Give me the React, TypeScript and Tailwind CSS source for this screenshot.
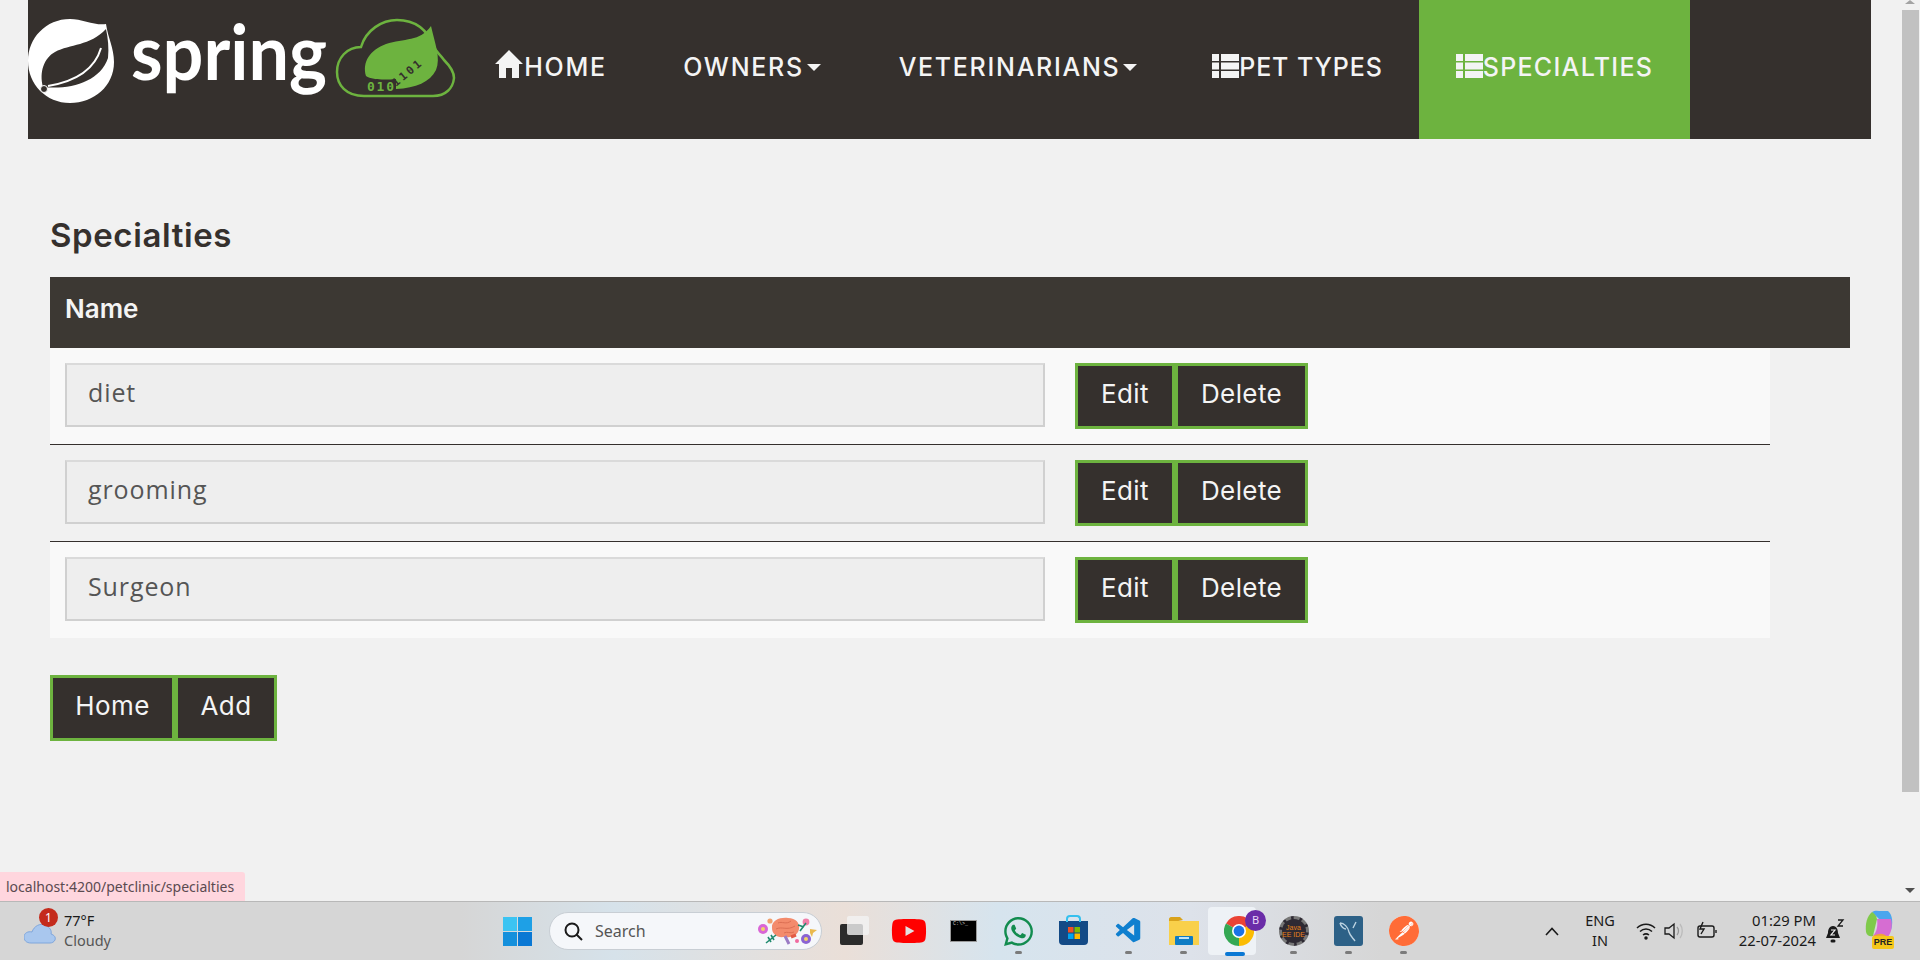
import React from "react";
import { FaWhatsapp, FaYoutube } from "react-icons/fa";
import { VscVscode } from "react-icons/vsc";
import { SiPostman } from "react-icons/si";

const Home = () => (
  <svg width="30" height="30" viewBox="0 0 30 30" className="mb-[6px] shrink-0">
    <path d="M15 1 L29 15 L25 15 L25 29 L18 29 L18 19 L12 19 L12 29 L5 29 L5 15 L1 15 Z" fill="#f4f4f4" />
  </svg>
);

const ThList = () => (
  <svg width="27" height="24" viewBox="0 0 27 24" className="mb-[3px] shrink-0">
    <g fill="#f4f4f4">
      <rect x="0" y="0" width="7" height="7" />
      <rect x="0" y="8.5" width="7" height="7" />
      <rect x="0" y="17" width="7" height="7" />
      <rect x="9" y="0" width="18" height="7" />
      <rect x="9" y="8.5" width="18" height="7" />
      <rect x="9" y="17" width="18" height="7" />
    </g>
  </svg>
);

const Caret = () => (
  <span className="ml-[3px] inline-block h-0 w-0 border-x-[7px] border-t-[7px] border-x-transparent border-t-[#f4f4f4]" />
);

const Logo = () => (
  <svg width="429" height="139" viewBox="28 0 429 139" className="shrink-0">
    <path d="M106 24 C108 38 114 48 114 62 C114 86 94 103 70 103 C46 103 28 84 28 61 C28 38 46 19 70 19 C82 19 96 26 106 24 Z" fill="#fff" />
    <path d="M106 29 C90 46 70 44 55 52 C44 58 39 72 43 87 C70 90 100 82 108 58 C109 48 108 38 106 29 Z" fill="#35302d" />
    <path d="M48 86 C72 82 94 72 101 48" fill="none" stroke="#fff" strokeWidth="2" />
    <circle cx="44" cy="89" r="3.5" fill="#35302d" stroke="#fff" strokeWidth="1" />
    <text x="131" y="80" fontFamily="Lato, sans-serif" fontSize="76" fontWeight="700" fill="#fff" textLength="196" lengthAdjust="spacingAndGlyphs">spring</text>
    <path d="M364 96 C346 96 337 85 337 72 C337 58 347 47 361 47 C366 30 382 20 397 20 C416 20 428 31 434 47 C436 52 440 54 444 60 C450 66 454 72 454 78 C453 88 446 96 433 96 Z" fill="none" stroke="#6db33f" strokeWidth="2.5" />
    <path d="M431 26 C435 44 441 58 436 70 C430 82 416 88 396 89 L396 79 C385 80 372 80 366 76 C362 62 370 50 386 44 C404 38 420 42 431 26 Z" fill="#6db33f" />
    <text x="367" y="91" fontFamily="'DejaVu Sans Mono', monospace" fontSize="13" fontWeight="700" fill="#6db33f" textLength="27">010</text>
    <text x="396" y="87" fontFamily="'DejaVu Sans Mono', monospace" fontSize="11" fontWeight="700" fill="#35302d" transform="rotate(-40 396 87)" textLength="34">1101</text>
  </svg>
);

const NavItem = ({ w, icon, label, caret, active, track }: { w: string; icon?: React.ReactNode; label: string; caret?: boolean; active?: boolean; track: string }) => (
  <div className={`flex h-full items-center justify-center pb-[5px] ${w} ${active ? "bg-[#6db33f]" : ""}`}>
    {icon}
    <span className={`font-['Inter',sans-serif] text-[25px] font-medium leading-none text-[#f4f4f4] ${track}`}>{label}</span>
    {caret && <Caret />}
  </div>
);

const Btn = ({ label, w }: { label: string; w: string }) => (
  <button className={`flex h-[66px] items-center justify-center border-[3px] border-[#6db33f] bg-[#35302d] pb-[5px] font-['Inter',sans-serif] text-[26px] font-normal tracking-[0.4px] text-[#f4f4f4] ${w}`}>
    {label}
  </button>
);

const Row = ({ name, bg, h, line }: { name: string; bg: string; h: string; line?: boolean }) => (
  <div className={`flex w-[1720px] items-start pl-[15px] pt-[15px] ${h} ${bg} ${line ? "border-b border-[#35302d]" : ""}`}>
    <div className="flex h-[64px] w-[980px] items-center border-2 border-[#d0d0d0] border-t-[#dadada] bg-[#eeeeee] pb-[5px] pl-[21px] font-['Open_Sans',sans-serif] text-[25px] tracking-[0.9px] text-[#555555]">
      {name}
    </div>
    <div className="ml-[30px] flex">
      <Btn label="Edit" w="w-[100px]" />
      <Btn label="Delete" w="w-[133px]" />
    </div>
  </div>
);

const Slot = ({ children, dot }: { children: React.ReactNode; dot?: boolean }) => (
  <div className="relative flex h-[59px] w-[55px] items-center justify-center">
    {children}
    {dot && <span className="absolute bottom-[7px] h-[3px] w-[7px] rounded-full bg-[#7b7b7b]" />}
  </div>
);

const Brain = () => (
  <svg width="66" height="36" viewBox="0 0 66 36">
    <path d="M18 15 C17 7 27 4 34 5 C42 5 46 10 45 16 C44 23 36 25 30 24 C23 25 18 21 18 15 Z" fill="#f38b6c" />
    <path d="M24 10 C28 8 32 12 37 8 M22 16 C28 13 33 18 41 13 M30 20 C33 18 36 21 40 19" fill="none" stroke="#dc6f53" strokeWidth="1" />
    <path d="M31 23 L35 31" stroke="#9b7bc4" strokeWidth="3" />
    <path d="M37 24 L42 22" stroke="#e25b45" strokeWidth="3" />
    <circle cx="9" cy="16" r="5" fill="#d966d6" /><circle cx="9" cy="16" r="2" fill="#f1d36a" />
    <circle cx="52" cy="26" r="5" fill="#8a63d2" /><circle cx="52" cy="26" r="2" fill="#f1d36a" />
    <circle cx="16" cy="8" r="2.6" fill="#f0a06e" />
    <circle cx="52" cy="9" r="3.4" fill="#f07ea8" />
    <circle cx="43" cy="28" r="2" fill="#f06aa0" />
    <path d="M46 18 L52 10 M44 12 L50 14 M12 30 L22 22 M14 24 L17 29 M17 22 L20 27" stroke="#1f8a6e" strokeWidth="1.6" />
    <path d="M56 16 L63 17 L59 20 L58 24 L56 20 Z" fill="#eab94e" />
  </svg>
);

const Chrome = () => (
  <svg width="30" height="30" viewBox="0 0 30 30">
    <path d="M15 15 L2 7.5 A15 15 0 0 1 28 7.5 Z" fill="#ea4335" />
    <path d="M15 15 L2 7.5 A15 15 0 0 0 15 30 Z" fill="#34a853" />
    <path d="M15 15 L28 7.5 A15 15 0 0 1 15 30 Z" fill="#fbbc04" />
    <circle cx="15" cy="15" r="7" fill="#fff" /><circle cx="15" cy="15" r="5.4" fill="#1a73e8" />
  </svg>
);

export default function App() {
  return (
    <div className="relative flex h-[960px] w-[1920px] flex-col overflow-hidden bg-[#f1f1f1]">
      <div className="flex h-[901px] w-full">
        <main className="w-[1900px] pl-[28px]">
          <nav className="flex h-[139px] w-[1843px] bg-[#35302d]">
            <Logo />
            <NavItem w="w-[187px]" icon={<Home />} label="HOME" track="tracking-[1.7px]" />
            <NavItem w="w-[216px]" label="OWNERS" caret track="tracking-[1.7px]" />
            <NavItem w="w-[316px]" label="VETERINARIANS" caret track="tracking-[1.7px]" />
            <NavItem w="w-[243px]" icon={<ThList />} label="PET TYPES" track="tracking-[0.9px]" />
            <NavItem w="w-[271px]" icon={<ThList />} label="SPECIALTIES" active track="tracking-[1.3px]" />
          </nav>
          <div className="-ml-[28px] pl-[50px]">
            <h2 className="mt-[74px] h-[64px] font-['Inter',sans-serif] text-[33px] font-semibold leading-[44px] tracking-[0.6px] text-[#35302d]">Specialties</h2>
            <div className="flex h-[71px] w-[1800px] items-center bg-[#3c3833] pb-[9px] pl-[15px] font-['Inter',sans-serif] text-[26px] font-semibold text-[#f4f4f4]">Name</div>
            <Row name="diet" bg="bg-[#f9f9f9]" h="h-[97px]" line />
            <Row name="grooming" bg="bg-[#f1f1f1]" h="h-[97px]" line />
            <Row name="Surgeon" bg="bg-[#f9f9f9]" h="h-[96px]" />
            <div className="mt-[37px] flex">
              <Btn label="Home" w="w-[125px]" />
              <Btn label="Add" w="w-[102px]" />
            </div>
          </div>
        </main>
        <aside className="flex w-[20px] flex-col items-center bg-[#f1f1f1]">
          <span className="h-0 w-0 border-x-[5px] border-b-[4px] border-x-transparent border-b-[#a3a3a3]" />
          <div className="mt-[6px] h-[782px] w-[17px] bg-[#c1c1c1]" />
          <span className="mt-auto mb-[8px] h-0 w-0 border-x-[5px] border-t-[5px] border-x-transparent border-t-[#505050]" />
        </aside>
      </div>

      <div className="absolute left-0 top-[872px] flex h-[29px] w-[245px] items-center rounded-tr-[3px] bg-[#ffd6de] pl-[6px] font-['Noto_Sans',sans-serif] text-[14px] text-[#5a4a50]">
        localhost:4200/petclinic/specialties
      </div>

      <footer className="flex h-[59px] w-full items-center border-t border-[#b8b8b8] bg-[linear-gradient(90deg,#d6d6d6_0%,#d6d6d6_24%,#d6e2ea_32%,#eadfd8_44%,#d6e4ee_52%,#dde2ea_62%,#d6d6d6_72%,#d6d6d6_100%)]">
        <div className="relative flex w-[490px] items-center pl-[24px]">
          <svg width="32" height="24" viewBox="0 0 32 24" className="mt-[4px]">
            <path d="M7 22 C2 22 0 19 0 16 C0 12 4 10 8 11 C10 5 16 2 21 4 C26 6 28 10 27 13 C30 14 32 16 31 19 C30 21 28 22 26 22 Z" fill="#a9c7ee" stroke="#7fa6dc" strokeWidth="1" />
          </svg>
          <span className="absolute left-[39px] top-[-2px] flex h-[19px] w-[19px] items-center justify-center rounded-full bg-[#c42b1c] font-['Noto_Sans',sans-serif] text-[12px] text-white">1</span>
          <div className="ml-[8px] pb-[2px] font-['Noto_Sans',sans-serif] text-[14.5px] leading-[20px]">
            <div className="text-[#1a1a1a]">77°F</div>
            <div className="text-[#555555]">Cloudy</div>
          </div>
        </div>
        <Slot>
          <svg width="29" height="29" viewBox="0 0 29 29">
            <rect width="14" height="14" fill="#3cc4f2" /><rect x="15" width="14" height="14" fill="#1ea0e6" />
            <rect y="15" width="14" height="14" fill="#1590dc" /><rect x="15" y="15" width="14" height="14" fill="#0a78d4" />
          </svg>
        </Slot>
        <div className="ml-[4px] flex h-[38px] w-[273px] items-center rounded-full border border-[#c8ced4] bg-[#f5f7fa] pl-[14px]">
          <svg width="19" height="19" viewBox="0 0 19 19" fill="none" stroke="#1a1a1a" strokeWidth="2"><circle cx="8" cy="8" r="6.5" /><path d="M12.5 12.5 L18 18" /></svg>
          <span className="ml-[12px] font-['Noto_Sans',sans-serif] text-[16px] text-[#555555]">Search</span>
          <span className="ml-auto mr-[1px] flex"><Brain /></span>
        </div>
        <div className="ml-[4px] flex">
          <Slot>
            <div className="relative h-[30px] w-[30px]">
              <span className="absolute bottom-[1px] left-[1px] h-[21px] w-[23px] rounded-[2px] bg-[#2b2b2b]" />
              <span className="absolute right-0 top-0 h-[19px] w-[22px] rounded-[2px] bg-[#f2f2f2]/80" />
            </div>
          </Slot>
          <Slot><FaYoutube size={36} color="#ff0000" /></Slot>
          <Slot>
            <div className="h-[22px] w-[27px] border border-[#9a9a9a] bg-black pl-[2px] font-['Liberation_Mono',monospace] text-[5px] leading-[6px] text-[#cccccc]">C:\&gt;_</div>
          </Slot>
          <Slot dot><FaWhatsapp size={33} color="#128c4f" /></Slot>
          <Slot>
            <div className="relative mt-[3px] flex h-[24px] w-[29px] items-center justify-center rounded-b-[4px] bg-[#134a86]">
              <span className="absolute -top-[6px] h-[7px] w-[15px] rounded-t-[4px] border-2 border-b-0 border-[#35c0ee]" />
              <svg width="12" height="12" viewBox="0 0 12 12"><rect width="5.5" height="5.5" fill="#f25022" /><rect x="6.5" width="5.5" height="5.5" fill="#7fba00" /><rect y="6.5" width="5.5" height="5.5" fill="#00a4ef" /><rect x="6.5" y="6.5" width="5.5" height="5.5" fill="#ffb900" /></svg>
            </div>
          </Slot>
          <Slot dot><VscVscode size={30} color="#0f7fcf" /></Slot>
          <Slot dot>
            <svg width="30" height="28" viewBox="0 0 30 28">
              <path d="M0 2 C0 1 1 0 2 0 L11 0 L14 3 L0 6 Z" fill="#d9a21b" />
              <rect y="4" width="30" height="24" fill="#f9d04a" />
              <rect x="6" y="19" width="18" height="9" fill="#0f7cc4" rx="1" /><rect x="10" y="20" width="10" height="2" fill="#bfe3f7" />
            </svg>
          </Slot>
          <Slot>
            <span className="absolute left-[-3px] top-[5px] h-[48px] w-[48px] rounded-[4px] bg-[#eef2f6]" />
            <span className="relative"><Chrome /></span>
            <span className="absolute right-[0px] top-[8px] flex h-[21px] w-[21px] items-center justify-center rounded-full bg-[#6a2ca8] font-['Noto_Sans',sans-serif] text-[11px] text-[#e8d8f8]">B</span>
            <span className="absolute bottom-[5px] left-[14px] h-[4px] w-[20px] rounded-full bg-[#0a78d4]" />
          </Slot>
          <Slot dot>
            <div className="relative flex h-[30px] w-[30px] items-center justify-center rounded-full border-[3px] border-dashed border-[#777777] bg-[#2e2a33] text-center font-['Liberation_Sans',sans-serif] text-[7px] leading-[7px] text-[#e8811a]">Java EE IDE</div>
          </Slot>
          <Slot dot>
            <div className="flex h-[30px] w-[29px] items-center justify-center rounded-[3px] bg-[#2d6187]">
              <svg width="22" height="24" viewBox="0 0 22 24" fill="none" stroke="#bcd3e2" strokeWidth="1.4"><path d="M2 4 C6 4 10 8 11 13 C12 17 15 19 17 22 M2 4 C3 8 6 10 8 10 M18 3 L15 9" /></svg>
            </div>
          </Slot>
          <Slot dot>
            <div className="flex h-[30px] w-[30px] items-center justify-center rounded-full bg-white"><SiPostman size={30} color="#ff6c37" /></div>
          </Slot>
        </div>
        <div className="ml-[110px] flex items-center font-['Noto_Sans',sans-serif] text-[#1a1a1a]">
          <div className="flex w-[22px] justify-center">
            <svg width="14" height="9" viewBox="0 0 14 9" fill="none" stroke="#1a1a1a" strokeWidth="1.6"><path d="M1 8 L7 1.5 L13 8" /></svg>
          </div>
          <div className="ml-[12px] w-[50px] pb-[2px] text-center text-[14.5px] leading-[20px]">ENG<br />IN</div>
          <div className="ml-[7px] flex w-[28px] justify-center">
            <svg width="20" height="18" viewBox="0 0 20 18" fill="none" stroke="#1a1a1a" strokeWidth="1.5"><path d="M1 6 C6 1 14 1 19 6 M4 9.5 C7.5 6 12.5 6 16 9.5 M7 13 C9 11.5 11 11.5 13 13" /><circle cx="10" cy="16" r="1" fill="#1a1a1a" /></svg>
          </div>
          <div className="flex w-[28px] justify-center">
            <svg width="20" height="20" viewBox="0 0 20 20" fill="none" stroke="#1a1a1a" strokeWidth="1.3"><path d="M1 7 L5 7 L10 3 L10 17 L5 13 L1 13 Z" /><path d="M13 6 C15 8 15 12 13 14" stroke="#999999" /><path d="M16 3 C19 7 19 13 16 17" stroke="#bbbbbb" /></svg>
          </div>
          <div className="flex w-[38px] justify-center">
            <svg width="22" height="20" viewBox="0 0 22 20" fill="none" stroke="#1a1a1a" strokeWidth="1.4"><rect x="2" y="5" width="16" height="11" rx="2" /><path d="M20 9 L20 12" /><path d="M7 1 L4 8 L8 8 L5 13" /></svg>
          </div>
          <div className="w-[90px] whitespace-nowrap pb-[2px] text-right text-[14.8px] leading-[20px]">01:29 PM<br />22-07-2024</div>
          <div className="flex w-[37px] justify-center">
            <svg width="22" height="28" viewBox="0 0 22 28" fill="#1a1a1a">
              <path d="M9 9 C5 9 4 13 4 16 L2 21 L16 21 L14 16 C14 13 13 9 9 9 Z" />
              <rect x="6.5" y="22.5" width="5" height="3" rx="1.5" />
              <path d="M7 13 L11 13 L7 18 L11 18" fill="none" stroke="#f4f4f4" strokeWidth="1.2" />
              <path d="M14 3 L19 3 L14 9 L19 9" fill="none" stroke="#1a1a1a" strokeWidth="1.3" />
            </svg>
          </div>
          <div className="relative ml-[6px] flex h-[42px] w-[40px] justify-center">
            <svg width="30" height="30" viewBox="0 0 30 30">
              <path d="M8 2 C11 0 14 1 18 1 L24 1 C29 5 29 14 27 20 L16 10 C13 7 10 4 8 2 Z" fill="#4aa6ee" />
              <path d="M8 2 C3 6 1 14 2 22 C3 26 6 27 9 26 L13 9 C12 5 10 3 8 2 Z" fill="#7fca4a" />
              <path d="M13 9 L27 9 C29 16 27 23 24 27 L9 26 C13 22 14 15 13 9 Z" fill="#d66dd2" />
              <path d="M9 26 C14 24 18 22 24 27 L12 28 Z" fill="#f2a33a" />
            </svg>
            <span className="absolute bottom-[3px] left-[13px] flex h-[13px] w-[22px] items-center justify-center rounded-[2px] bg-[#f5c71a] font-['Liberation_Sans',sans-serif] text-[9px] font-bold text-[#222222]">PRE</span>
          </div>
        </div>
      </footer>
    </div>
  );
}
